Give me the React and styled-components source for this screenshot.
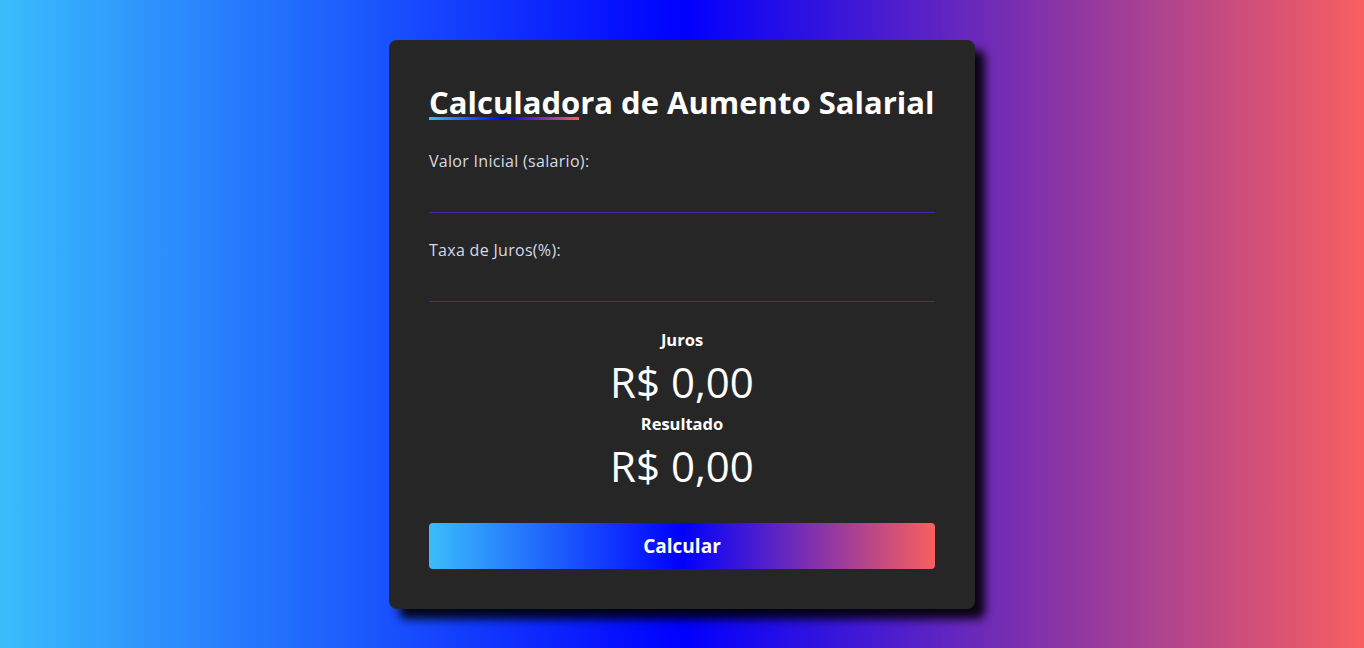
import styled, { createGlobalStyle } from "styled-components";

const GlobalStyle = createGlobalStyle`
  * {
    box-sizing: border-box;
    margin: 0;
    padding: 0;
  }
  body {
    font-family: "Open Sans", "Noto Sans", sans-serif;
    background: linear-gradient(to right, #3abdfb, #0000ff, #f95f5f);
    min-height: 100vh;
    color: #fff;
  }
`;

const Page = styled.main`
  min-height: 100vh;
  display: flex;
  justify-content: center;
  align-items: flex-start;
  padding: 40px 0;
`;

const Card = styled.section`
  width: 586px;
  height: 569px;
  background-color: #262626;
  border-radius: 8px;
  padding: 40px;
  box-shadow: 10px 10px 10px rgba(0, 0, 0, 0.9);
  display: flex;
  flex-direction: column;
`;

const Title = styled.h1`
  font-size: 31px;
  font-weight: 700;
  line-height: 44px;
  white-space: nowrap;
  position: relative;
  margin-bottom: 26px;

  &::after {
    content: "";
    position: absolute;
    left: 0;
    bottom: 4px;
    width: 150px;
    height: 3px;
    background: linear-gradient(to right, #3abdfb, #0000ff 50%, #f95f5f);
  }
`;

const Field = styled.div`
  display: flex;
  flex-direction: column;
  margin-bottom: 26px;
`;

const Label = styled.label`
  font-size: 16px;
  font-weight: 500;
  letter-spacing: 0.3px;
  color: #d4dbe6;
  line-height: 22px;
`;

const Input = styled.input`
  height: 41px;
  background: transparent;
  border: none;
  border-bottom: 1px solid #5020aa;
  color: #fff;
  font-family: inherit;
  font-size: 16px;
  outline: none;
`;

const Results = styled.div`
  display: flex;
  flex-direction: column;
  align-items: center;
`;

const ResultLabel = styled.h3`
  font-size: 16.5px;
  font-weight: 700;
  line-height: 24px;
`;

const ResultValue = styled.p`
  font-size: 42px;
  font-weight: 400;
  line-height: 60px;
`;

const Button = styled.button`
  margin-top: 27px;
  height: 46px;
  width: 100%;
  border: none;
  border-radius: 4px;
  background: linear-gradient(to right, #3abdfb, #0000ff, #f95f5f);
  color: #fff;
  font-family: inherit;
  font-size: 19px;
  font-weight: 700;
  cursor: pointer;
`;

function App() {
  return (
    <>
      <GlobalStyle />
      <Page>
        <Card>
          <Title>Calculadora de Aumento Salarial</Title>
          <Field>
            <Label htmlFor="salario">Valor Inicial (salario):</Label>
            <Input id="salario" type="number" />
          </Field>
          <Field>
            <Label htmlFor="juros">Taxa de Juros(%):</Label>
            <Input id="juros" type="number" />
          </Field>
          <Results>
            <ResultLabel>Juros</ResultLabel>
            <ResultValue>R$ 0,00</ResultValue>
            <ResultLabel>Resultado</ResultLabel>
            <ResultValue>R$ 0,00</ResultValue>
          </Results>
          <Button>Calcular</Button>
        </Card>
      </Page>
    </>
  );
}

export default App;
